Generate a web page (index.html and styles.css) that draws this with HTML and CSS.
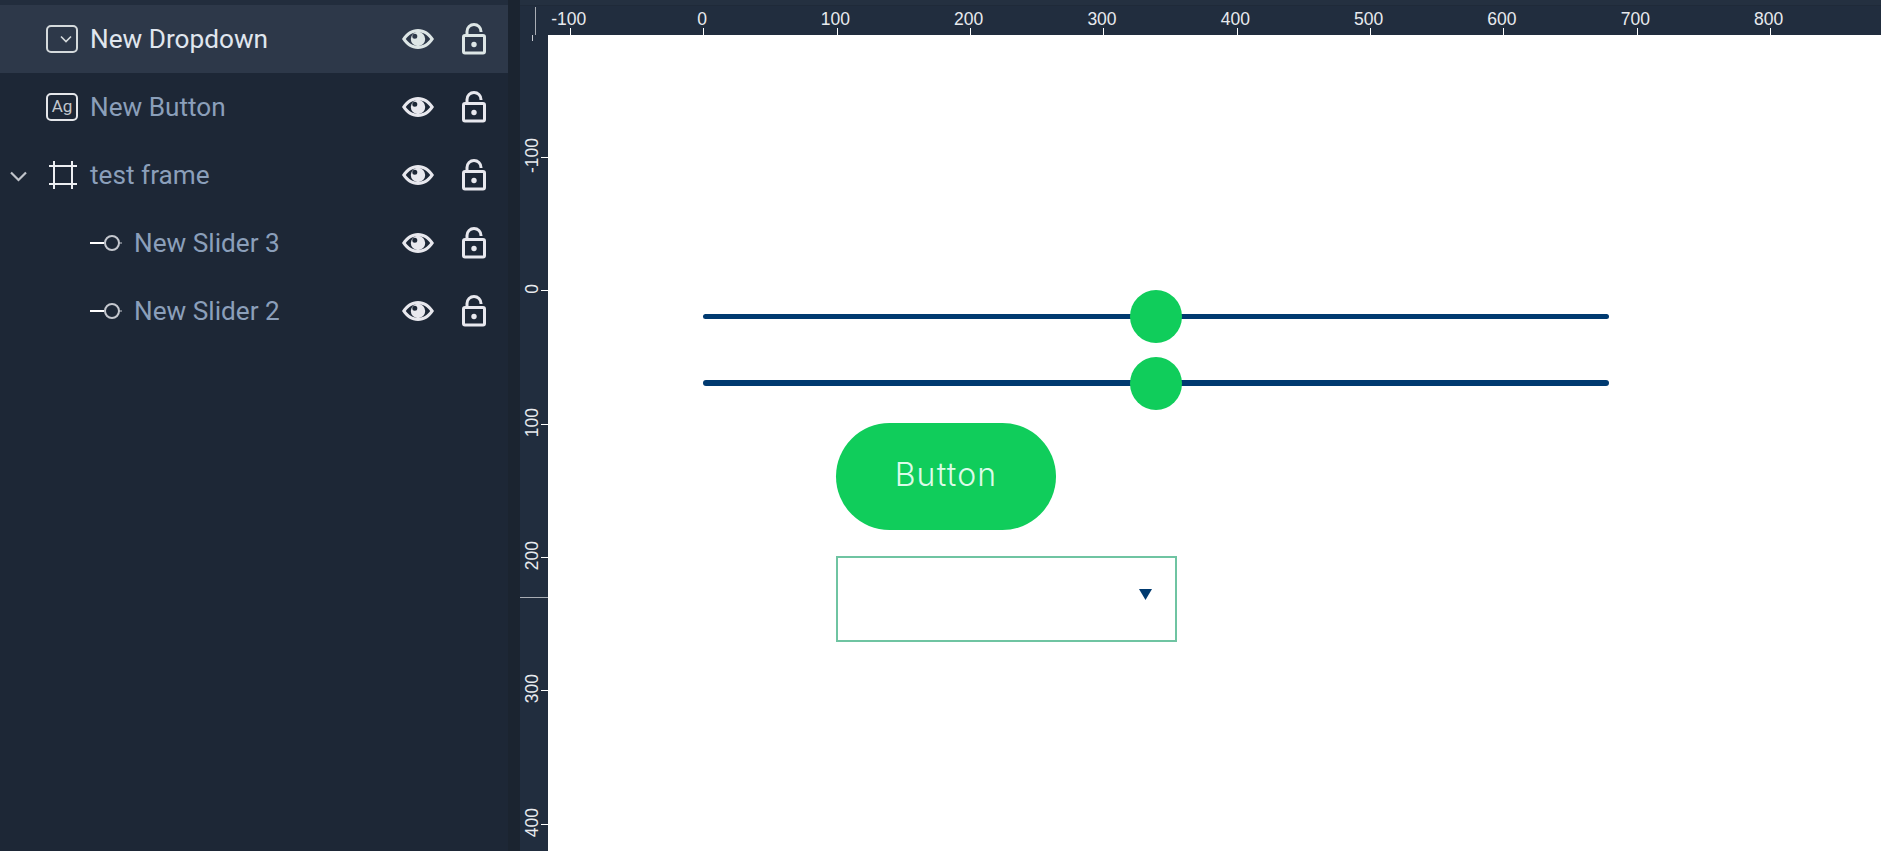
FILE: index.html
```html
<!DOCTYPE html>
<html lang="en">
<head>
    <meta charset="UTF-8">
    <meta name="viewport" content="width=device-width, initial-scale=1.0">
    <title>Layers</title>
    <link rel="stylesheet" href="styles.css">
</head>
<body>
    <svg class="defs" width="0" height="0">
        <symbol id="eye" viewBox="0 0 32 20">
            <path fill-rule="evenodd" fill="currentColor" d="M0 10C4 3.500 9.500 0 16 0s12 3.500 16 10c-4 6.500-9.500 10-16 10S4 16.500 0 10zm3.800 0C6.800 14.300 10.800 16.800 16 16.800S25.200 14.300 28.200 10C25.200 5.700 21.200 3.200 16 3.200S6.800 5.700 3.800 10z"/>
            <path fill-rule="evenodd" fill="currentColor" d="M16 2.800a7.200 7.200 0 1 1 0 14.400 7.200 7.200 0 0 1 0-14.400zM12.800 4.800a2.500 2.500 0 1 0 0 5 2.500 2.500 0 0 0 0-5z"/>
        </symbol>
        <symbol id="lock" viewBox="0 0 24 32">
            <rect x="1.500" y="12.500" width="21" height="17.500" rx="1.500" fill="none" stroke="currentColor" stroke-width="3"/>
            <path fill="none" stroke="currentColor" stroke-width="3" d="M5 12V8.500a7 7 0 0 1 14 0V9"/>
            <circle cx="12" cy="21.500" r="2.700" fill="currentColor"/>
        </symbol>
        <symbol id="slider" viewBox="0 0 32 16">
            <path fill="none" stroke="#fff" stroke-width="2" d="M0 8h14"/>
            <circle cx="22" cy="8" r="7" fill="none" stroke="#c5c8cf" stroke-width="2"/>
            <path fill="none" stroke="#c5c8cf" stroke-width="1" d="M29 8h3"/>
        </symbol>
    </svg>

    <div class="app">
        <aside class="layers">
            <div class="layer selected">
                <svg class="type-icon" width="32" height="28" viewBox="0 0 32 28">
                    <rect x="1" y="1" width="30" height="26" rx="4" fill="none" stroke="currentColor" stroke-width="2"/>
                    <path d="M15 11.500l5 5 5-5" fill="none" stroke="currentColor" stroke-width="1.600"/>
                </svg>
                <span class="name">New Dropdown</span>
                <svg class="eye"><use href="#eye"/></svg>
                <svg class="lock"><use href="#lock"/></svg>
            </div>
            <div class="layer">
                <span class="type-ag">Ag</span>
                <span class="name">New Button</span>
                <svg class="eye"><use href="#eye"/></svg>
                <svg class="lock"><use href="#lock"/></svg>
            </div>
            <div class="layer">
                <svg class="caret" width="17" height="11" viewBox="0 0 17 11">
                    <path d="M1 1.500l7.500 7.500 7.500-7.500" fill="none" stroke="#c0c4cb" stroke-width="2.200"/>
                </svg>
                <svg class="frame-icon" width="28" height="28" viewBox="0 0 28 28">
                    <path d="M0 5h28M0 23h28M5 0v28M23 0v28" fill="none" stroke="currentColor" stroke-width="2"/>
                </svg>
                <span class="name">test frame</span>
                <svg class="eye"><use href="#eye"/></svg>
                <svg class="lock"><use href="#lock"/></svg>
            </div>
            <div class="layer child">
                <svg class="slider-icon"><use href="#slider"/></svg>
                <span class="name">New Slider 3</span>
                <svg class="eye"><use href="#eye"/></svg>
                <svg class="lock"><use href="#lock"/></svg>
            </div>
            <div class="layer child">
                <svg class="slider-icon"><use href="#slider"/></svg>
                <span class="name">New Slider 2</span>
                <svg class="eye"><use href="#eye"/></svg>
                <svg class="lock"><use href="#lock"/></svg>
            </div>
        </aside>

        <div class="divider"></div>

        <main class="editor">
            <div class="ruler-top">
                <div class="ruler-x">
                    <div class="mark-x"><span>-100</span><i></i></div>
                    <div class="mark-x"><span>0</span><i></i></div>
                    <div class="mark-x"><span>100</span><i></i></div>
                    <div class="mark-x"><span>200</span><i></i></div>
                    <div class="mark-x"><span>300</span><i></i></div>
                    <div class="mark-x"><span>400</span><i></i></div>
                    <div class="mark-x"><span>500</span><i></i></div>
                    <div class="mark-x"><span>600</span><i></i></div>
                    <div class="mark-x"><span>700</span><i></i></div>
                    <div class="mark-x"><span>800</span><i></i></div>
                </div>
                <div class="cursor-x"></div>
            </div>
            <div class="editor-body">
                <div class="ruler-y">
                    <div class="cursor-tick"></div>
                    <div class="mark-y"><span>-100</span><i></i></div>
                    <div class="mark-y"><span>0</span><i></i></div>
                    <div class="mark-y"><span>100</span><i></i></div>
                    <div class="mark-y"><span>200</span><i></i></div>
                    <div class="mark-y"><span>300</span><i></i></div>
                    <div class="mark-y"><span>400</span><i></i></div>
                    <div class="cursor-y"></div>
                </div>
                <div class="canvas">
                    <div class="slider slider-a"><div class="thumb"></div></div>
                    <div class="slider slider-b"><div class="thumb"></div></div>
                    <div class="widget-button">Button</div>
                    <div class="widget-dropdown"><div class="arrow"></div></div>
                </div>
            </div>
        </main>
    </div>
</body>
</html>
```

FILE: styles.css
```css
* {
    box-sizing: border-box;
}
html, body {
    margin: 0;
    height: 100%;
    overflow: hidden;
}
body {
    font-family: Roboto, sans-serif;
    background: #1d2736;
}
.defs {
    position: absolute;
}
.app {
    display: flex;
    height: 851px;
}

/* layer list */
.layers {
    width: 508px;
    flex: none;
    border-top: 5px solid #222d3d;
    background: #1d2736;
}
.layer {
    display: flex;
    align-items: center;
    height: 68px;
    padding-left: 46px;
    color: #e8e8ee;
}
.layer.selected {
    background: #2d3849;
    color: #dde6e6;
}
.layer.child {
    padding-left: 90px;
}
.name {
    flex: 1;
    margin-left: 12px;
    font-size: 26.200px;
    color: #8b9fba;
}
.selected .name {
    color: #e0e6ee;
}
.type-icon {
    flex: none;
    color: #d5dadc;
}
.type-ag {
    flex: none;
    width: 32px;
    height: 28px;
    border: 2px solid #e4e6ea;
    border-radius: 5px;
    font-size: 17px;
    line-height: 23px;
    text-align: center;
    color: #c3c7ce;
}
.caret {
    flex: none;
    margin-left: -36px;
    margin-right: 20px;
    margin-top: 3px;
}
.frame-icon {
    flex: none;
    margin-left: 2px;
    margin-right: 1px;
    color: #eceef2;
}
.slider-icon {
    flex: none;
    width: 32px;
    height: 16px;
}
.eye {
    flex: none;
    width: 32px;
    height: 20px;
    margin-right: 28px;
}
.lock {
    flex: none;
    width: 24px;
    height: 32px;
    margin-right: 22px;
}

.divider {
    width: 12px;
    flex: none;
    background: #1b2430;
}

/* rulers */
.editor {
    flex: 1;
    min-width: 0;
    display: flex;
    flex-direction: column;
}
.ruler-top {
    position: relative;
    height: 35px;
    flex: none;
    background: #212d3e;
    border-top: 5px solid #243040;
    box-shadow: inset 0 1px #1f2a39;
    overflow: hidden;
    padding-left: 28px;
}
.ruler-x {
    display: flex;
    margin-left: -44px;
    height: 30px;
}
.mark-x {
    flex: none;
    width: 133.330px;
    height: 30px;
    display: flex;
    flex-direction: column;
    align-items: center;
    justify-content: flex-end;
    color: #e8eaee;
    font-size: 17.500px;
    line-height: 20px;
}
.mark-x span {
    margin: 0 0 -1px -4px;
    font-family: "Liberation Sans", sans-serif;
}
.mark-x i {
    display: block;
    width: 1px;
    height: 7px;
    background: #fff;
}
.cursor-x {
    position: absolute;
    left: 15px;
    top: 2px;
    width: 1px;
    height: 28px;
    background: #a9adb4;
}
.editor-body {
    flex: 1;
    min-height: 0;
    display: flex;
}
.ruler-y {
    position: relative;
    flex: none;
    width: 28px;
    background: #212d3e;
    overflow: hidden;
    padding-top: 56px;
}
.cursor-tick {
    position: absolute;
    left: 12px;
    top: 0;
    width: 1px;
    height: 6px;
    background: #c9ccd2;
}
.mark-y {
    height: 133.330px;
    display: flex;
    align-items: center;
    justify-content: flex-end;
    color: #e8eaee;
    font-size: 17.500px;
}
.mark-y span {
    margin-right: 2px;
    margin-bottom: 4px;
    font-family: "Liberation Sans", sans-serif;
    line-height: 14px;
    writing-mode: vertical-rl;
    transform: rotate(180deg);
}
.mark-y i {
    flex: none;
    width: 7px;
    height: 1px;
    background: #fff;
}
.cursor-y {
    position: absolute;
    left: 0;
    top: 562px;
    width: 28px;
    height: 1px;
    background: #a9adb4;
}

/* canvas */
.canvas {
    position: relative;
    flex: 1;
    min-width: 0;
    background: #fff;
}
.slider {
    position: absolute;
    left: 155px;
    width: 906px;
    background: #003a70;
    border-radius: 3px;
}
.slider-a {
    top: 279px;
    height: 5px;
}
.slider-b {
    top: 345px;
    height: 6px;
}
.thumb {
    position: absolute;
    left: 427px;
    top: 50%;
    width: 52px;
    height: 53px;
    margin-top: -26.500px;
    border-radius: 50%;
    background: #10cd5b;
}
.widget-button {
    position: absolute;
    left: 288px;
    top: 388px;
    width: 220px;
    height: 107px;
    border-radius: 54px;
    background: #10cd5b;
    color: #dcfbe8;
    font-family: Inter, sans-serif;
    font-weight: 300;
    font-size: 32px;
    letter-spacing: 1.200px;
    line-height: 103px;
    text-align: center;
}
.widget-dropdown {
    position: absolute;
    left: 288px;
    top: 521px;
    width: 341px;
    height: 86px;
    border: 2px solid #6fc4a2;
}
.arrow {
    position: absolute;
    left: 301px;
    top: 31px;
    width: 13px;
    height: 11px;
    background: #003a70;
    clip-path: polygon(0 0, 100% 0, 50% 100%);
}
```
